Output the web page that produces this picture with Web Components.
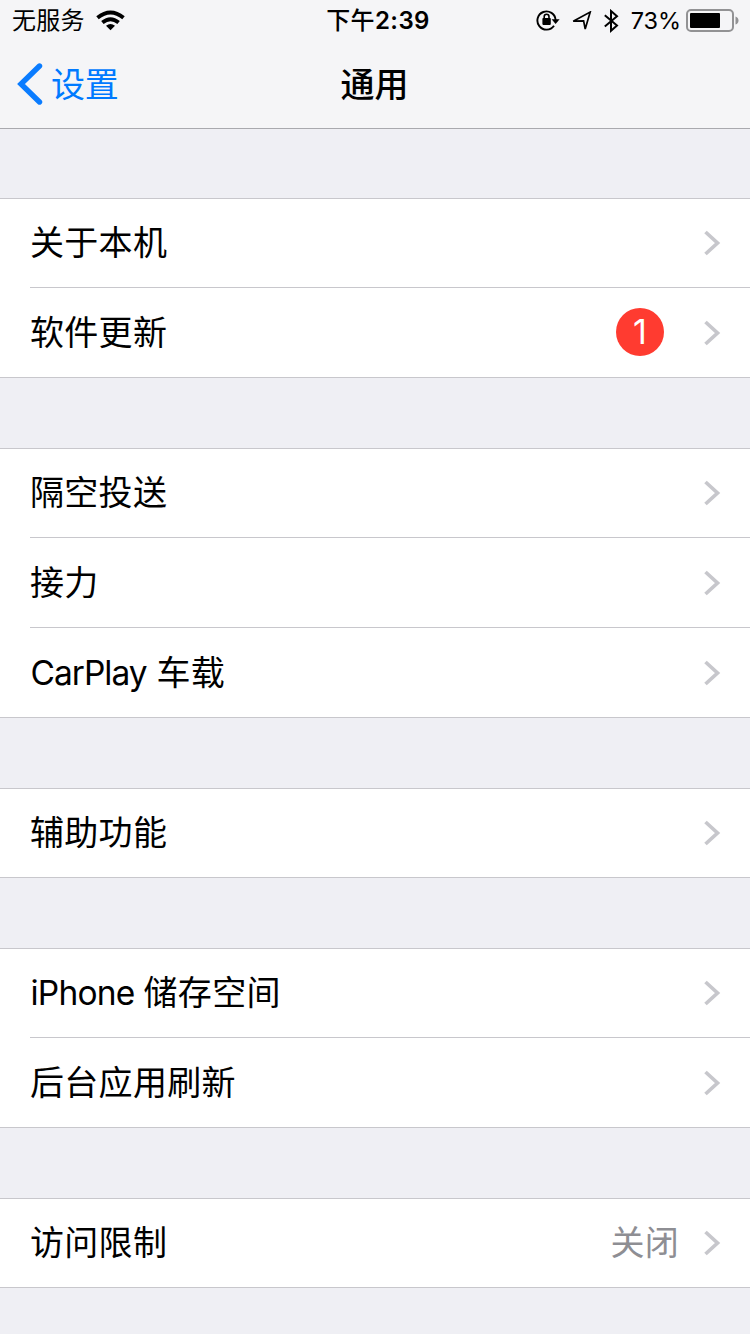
<!DOCTYPE html>
<html lang="zh-CN">
<head>
<meta charset="utf-8">
<title>通用</title>
<style>
html,body{margin:0;height:1334px;overflow:hidden;background:#efeff4}
body{font-family:Inter,"Noto Sans CJK SC",sans-serif;color:#000}
</style>
</head>
<body>
<settings-screen></settings-screen>
<script>
function define(name, html) {
  const t = document.createElement('template');
  t.innerHTML = html;
  customElements.define(name, class extends HTMLElement {
    constructor() {
      super();
      this.attachShadow({mode: 'open'}).append(t.content.cloneNode(true));
    }
  });
}

define('status-bar', `
<style>
:host{display:grid;grid-template-columns:1fr auto 1fr;height:41px;align-items:center;font-size:24px;line-height:41px;white-space:nowrap}
.left,.right{display:flex;align-items:center}
.left{padding-left:12px;gap:11px}
.left span{letter-spacing:.2px}
.time{font-weight:500;letter-spacing:.4px;padding-left:6px}
.time b{font-weight:600}
.right{justify-content:flex-end;padding-right:11px}
.pct{font-size:23.5px;letter-spacing:-.1px;margin:0 5px 0 12px}
svg{display:block;flex:none}
</style>
<div class="left"><span>无服务</span>
<svg width="29" height="22" viewBox="0 0 29 22"><g fill="none" stroke="#000" stroke-width="3.900"><path d="M1.500 7.700Q14.500-2.800 27.500 7.700"/><path d="M6.400 12.500Q14.500 5.900 22.600 12.500"/></g><path d="M10 15.800Q14.500 12.200 19 15.800L14.500 20.300Z"/></svg></div>
<div class="time">下午<b>2:39</b></div>
<div class="right">
<svg width="24" height="22" viewBox="0 0 24 22"><path d="M18 15.700A9.100 9.100 0 1 1 19.600 10" fill="none" stroke="#000" stroke-width="1.900"/><path d="M15.600 9.300h8l-4 4.700z"/><rect x="6.400" y="8.100" width="8.400" height="6.800" rx=".8"/><path d="M8.200 8.900V6.700a2.400 2.400 0 0 1 4.800 0V8.900" fill="none" stroke="#000" stroke-width="1.600"/></svg>
<svg style="margin-left:11px" width="21" height="20" viewBox="0 0 21 20"><path d="M2.200 10.200L19.200 1.100 14.200 18 12.600 9.900Z" fill="none" stroke="#000" stroke-width="1.700"/></svg>
<svg style="margin-left:11px" width="16" height="24" viewBox="0 0 16 24"><path d="M1.800 6.200L14 16.600 8 21.800V2L14 7.200 1.800 17.600" fill="none" stroke="#000" stroke-width="2"/></svg>
<span class="pct">73%</span>
<svg width="53" height="24" viewBox="0 0 53 24"><rect x="1" y="1" width="46" height="21" rx="4" fill="none" stroke="#929294" stroke-width="2"/><rect x="4" y="4" width="30" height="15" rx="1"/><path d="M49.500 7.500q3 1 3 4t-3 4z" fill="#929294"/></svg>
</div>`);

define('nav-bar', `
<style>
:host{display:grid;grid-template-columns:1fr auto 1fr;height:87px;align-items:center;font-size:34px;line-height:87px;border-bottom:1px solid #a9a9ae}
.back{display:flex;align-items:center;color:#007aff;padding-left:17px;gap:8px;letter-spacing:-.3px}
.title{font-weight:500;margin-left:-1px}
svg{display:block}
</style>
<div class="back"><svg width="26" height="44" viewBox="0 0 26 44"><path d="M22.500 3L4 21 22.500 39" fill="none" stroke="#0a7cff" stroke-width="5.400" stroke-linecap="round"/></svg><slot name="back"></slot></div>
<div class="title"><slot></slot></div>`);

define('settings-group', `
<style>
:host{display:block;background:#fff;border-top:1px solid #c8c7cc;border-bottom:1px solid #c8c7cc;margin-bottom:70px}
::slotted(settings-row:not(:last-child)){--line:#c8c7cc}
::slotted(settings-row:first-child){--row:88px}
</style><slot></slot>`);

define('settings-row', `
<style>
:host{display:block;padding-left:30px}
.row{display:flex;align-items:center;height:var(--row,89px);border-bottom:1px solid var(--line,transparent);font-size:34px;line-height:88px;letter-spacing:.3px;padding-right:29px;white-space:nowrap}
:host(:last-child) .row{border-bottom:0}
.label{flex:1}
::slotted([slot=detail]){color:#8e8e93}
svg{display:block;margin-left:25px}
</style>
<div class="row"><span class="label"><slot></slot></span><slot name="detail"></slot>
<svg width="17" height="28" viewBox="0 0 17 28"><path d="M1.500 3L13.500 14 1.500 25" fill="none" stroke="#c7c7cc" stroke-width="3.700"/></svg></div>`);

define('count-badge', `
<style>
:host{display:block;width:48px;height:48px;border-radius:50%;background:#ff3b30;font-size:34px;line-height:48px;text-align:center;letter-spacing:0;margin-right:15px;margin-bottom:2px}
span{color:#fff}
</style><span><slot></slot></span>`);

define('settings-screen', `
<style>
:host{display:block;width:750px;height:1334px;overflow:hidden;background:#efeff4}
header{background:#f5f5f7}
main{padding-top:69px}
.latin{letter-spacing:-1px;font-size:33.5px;margin:0 1.5px 0 .5px}
.phone{letter-spacing:-.8px;margin-right:.5px}
</style>
<header>
<status-bar></status-bar>
<nav-bar><span slot="back">设置</span>通用</nav-bar>
</header>
<main>
<settings-group>
<settings-row>关于本机</settings-row>
<settings-row>软件更新<count-badge slot="detail">1</count-badge></settings-row>
</settings-group>
<settings-group>
<settings-row>隔空投送</settings-row>
<settings-row>接力</settings-row>
<settings-row><span class="latin">CarPlay </span>车载</settings-row>
</settings-group>
<settings-group><settings-row>辅助功能</settings-row></settings-group>
<settings-group>
<settings-row><span class="latin phone">iPhone </span>储存空间</settings-row>
<settings-row>后台应用刷新</settings-row>
</settings-group>
<settings-group><settings-row>访问限制<span slot="detail">关闭</span></settings-row></settings-group>
</main>`);
</script>
</body>
</html>
